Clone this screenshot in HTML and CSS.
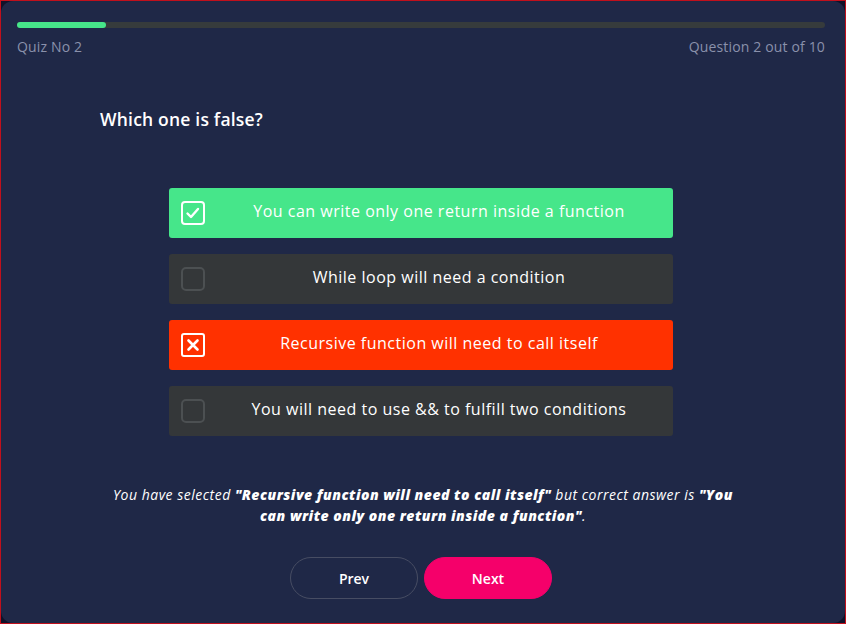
FILE: index.html
```html
<!DOCTYPE html>
<html lang="en">
<head>
<meta charset="utf-8">
<title>Quiz</title>
<link rel="stylesheet" href="styles.css">
</head>
<body>
<div class="frame">
  <main class="card">
    <div class="progress"><div class="progress-fill" style="width:89px"></div></div>
    <div class="meta">
      <span>Quiz No 2</span>
      <span>Question 2 out of 10</span>
    </div>
    <h1 class="question">Which one is false?</h1>
    <ul class="options">
      <li class="option correct">
        <span class="box">
          <svg viewBox="0 0 24 24" width="24" height="24"><rect x="1" y="1" width="22" height="22" rx="3" fill="none" stroke="#fff" stroke-width="2"/><path d="M6.5 12.5l3.5 3.5 7-8" fill="none" stroke="#fff" stroke-width="2.4" stroke-linecap="round" stroke-linejoin="round"/></svg>
        </span>
        <span class="label">You can write only one return inside a function</span>
      </li>
      <li class="option">
        <span class="box">
          <svg viewBox="0 0 24 24" width="24" height="24"><rect x="1" y="1" width="22" height="22" rx="4" fill="none" stroke="#4c5052" stroke-width="2"/></svg>
        </span>
        <span class="label">While loop will need a condition</span>
      </li>
      <li class="option wrong">
        <span class="box">
          <svg viewBox="0 0 24 24" width="24" height="24"><rect x="1" y="1" width="22" height="22" rx="2" fill="none" stroke="#fff" stroke-width="2"/><path d="M7.5 7.5l9 9M16.5 7.5l-9 9" fill="none" stroke="#fff" stroke-width="2.6" stroke-linecap="round"/></svg>
        </span>
        <span class="label">Recursive function will need to call itself</span>
      </li>
      <li class="option">
        <span class="box">
          <svg viewBox="0 0 24 24" width="24" height="24"><rect x="1" y="1" width="22" height="22" rx="4" fill="none" stroke="#4c5052" stroke-width="2"/></svg>
        </span>
        <span class="label">You will need to use &amp;&amp; to fulfill two conditions</span>
      </li>
    </ul>
    <p class="feedback">You have selected <b>"Recursive function will need to call itself"</b> but correct answer is <b>"You can write only one return inside a function"</b>.</p>
    <div class="nav">
      <button class="btn prev">Prev</button>
      <button class="btn next">Next</button>
    </div>
  </main>
</div>
</body>
</html>
```

FILE: styles.css
```css
* { box-sizing: border-box; }
html, body { margin: 0; padding: 0; }
body {
  width: 846px;
  height: 624px;
  background: #12152e;
  font-family: "Open Sans", "Noto Sans", sans-serif;
}
.frame {
  width: 846px;
  height: 624px;
  border: 1px solid #c0101c;
  background: #10122a;
}
.card {
  height: 622px;
  background: #1f2847;
  border-radius: 12px;
  padding: 21px 20px 0 16px;
  display: flex;
  flex-direction: column;
}
.progress {
  height: 6px;
  border-radius: 3px;
  background: #363b3c;
}
.progress-fill {
  height: 6px;
  border-radius: 3px;
  background: #46e68a;
}
.meta {
  display: flex;
  justify-content: space-between;
  margin-top: 9px;
  font-size: 14px;
  font-weight: 500;
  color: #8a91ab;
  line-height: 20px;
  letter-spacing: 0.15px;
}
.question {
  margin: 50px 0 0 83px;
  font-size: 17.5px;
  font-weight: 600;
  color: #ffffff;
  line-height: 24px;
  letter-spacing: 0.2px;
}
.options {
  list-style: none;
  margin: 57px 0 0 152px;
  padding: 0;
  width: 504px;
  display: flex;
  flex-direction: column;
  gap: 16px;
}
.option {
  height: 50px;
  border-radius: 3px;
  background: #343739;
  display: flex;
  align-items: center;
  padding-left: 12px;
  color: #ffffff;
}
.option.correct { background: #46e68a; }
.option.wrong { background: #ff3100; }
.box { width: 24px; height: 24px; display: flex; }
.label {
  flex: 1;
  text-align: center;
  font-size: 16px;
  line-height: 20px;
  letter-spacing: 0.5px;
  padding-bottom: 4px;
}
.feedback {
  margin: 48px auto 0;
  width: 640px;
  text-align: center;
  font-style: italic;
  font-size: 14px;
  line-height: 21px;
  letter-spacing: 0.5px;
  color: #ffffff;
  position: relative;
  left: 2px;
}
.feedback b { font-weight: 800; }
.nav {
  margin-top: 31px;
  display: flex;
  justify-content: center;
  gap: 6px;
}
.btn {
  width: 128px;
  height: 42px;
  border-radius: 21px;
  font-family: inherit;
  font-size: 14px;
  font-weight: 600;
  color: #ffffff;
  cursor: pointer;
}
.prev { background: transparent; border: 1px solid #474d63; }
.next { background: #f5006a; border: 1px solid #f5006a; }
```
